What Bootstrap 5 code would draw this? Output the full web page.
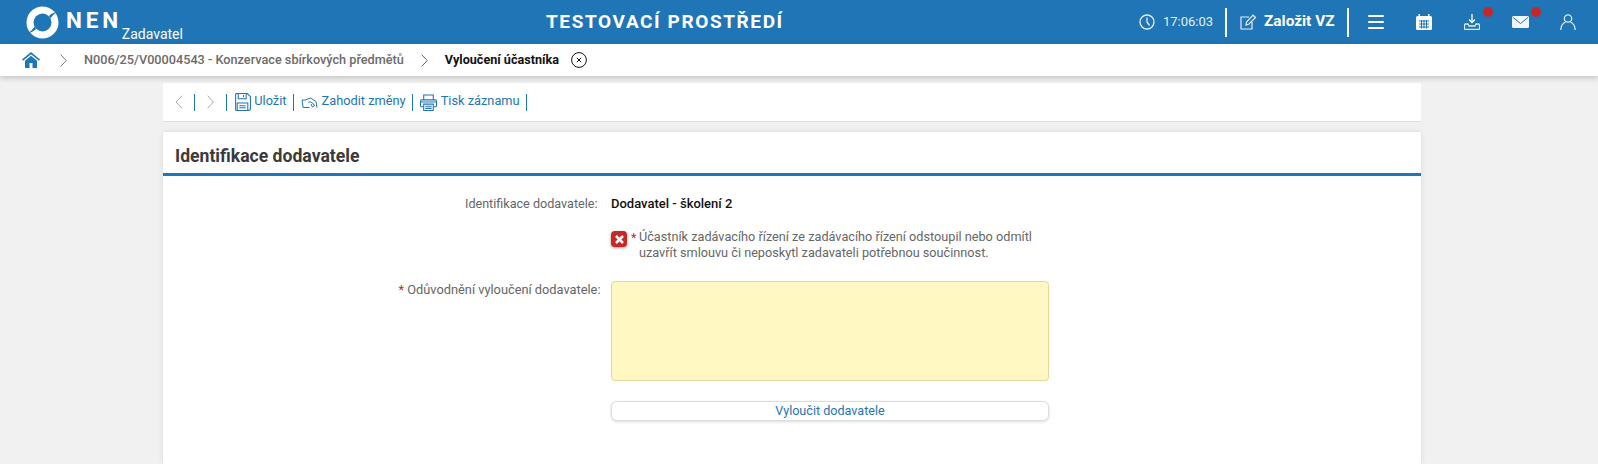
<!DOCTYPE html>
<html lang="cs">

<head>
    <meta charset="UTF-8">
    <meta name="viewport" content="width=device-width, initial-scale=1.0">
    <title>NEN Zadavatel</title>
    <link rel="stylesheet" href="https://cdn.jsdelivr.net/npm/bootstrap@5.3.3/dist/css/bootstrap.min.css">
    <script src="https://cdn.jsdelivr.net/npm/bootstrap@5.3.3/dist/js/bootstrap.bundle.min.js"></script>
    <style>
        html, body { height: 464px; overflow: hidden; }
        body { background: #f1f1f1; font-family: Roboto, "Liberation Sans", sans-serif; font-size: 12.6px; color: #555; }
        svg { display: block; flex: none; }

        .topbar { height: 44px; background: #1f75b5; color: #fff; padding-right: 6px; }
        .logo-box { padding-left: 26px; }
        .logo-nen { font-size: 22.5px; font-weight: 700; letter-spacing: 3.8px; line-height: 1; margin-left: 7px; margin-top: -3px; }
        .logo-role { font-size: 14px; line-height: 1; align-self: flex-end; margin-bottom: 3px; margin-left: 0; }
        .env-title { font-size: 19px; font-weight: 700; letter-spacing: 1.6px; left: 546px; top: 9px; line-height: 26px; }
        .clock-time { font-size: 13px; color: #e3eff8; margin-left: 8px; margin-right: 13px; width: 49px; }
        .top-sep { width: 2px; height: 29px; background: #fff; }
        .new-btn { font-size: 15.4px; font-weight: 700; width: 120px; padding-left: 13px; gap: 7px; }
        .top-icon { width: 48px; height: 44px; }
        .first-icon { margin-left: 3px; }
        .alert-dot { width: 10px; height: 10px; border-radius: 50%; background: #c62828; top: 7px; right: 3px; }

        .crumbs { height: 32px; background: #fff; box-shadow: 0 2px 6px rgba(0,0,0,.2); padding-left: 22px; font-weight: 500; position: relative; }
        .crumb-path { color: #6e6a68; font-size: 12.7px; }
        .crumb-now { color: #111; font-weight: 700; }
        .chev-one { margin: 0 17px 0 20px; }
        .chev-two { margin: 0 17px; }
        .crumb-close { margin-left: 12px; }

        .page-wrap { width: 1258px; margin-left: 163px; }
        .tools { height: 39px; margin-top: 7px; background: #fff; border-bottom: 1px solid #ddd; color: #1f75b5; font-size: 12.8px; }
        .tool-sep { width: 1px; height: 17px; background: #1f75b5; }
        .tool-btn { gap: 3.5px; padding: 0 6.5px 0 7px; }
        .tool-btn span { margin-top: -2px; }
        .arrow-btn { padding: 0 11.7px; }

        .panel { margin-top: 10px; background: #fff; box-shadow: 0 0 6px rgba(0,0,0,.1); height: 332px; }
        .panel-head { height: 44px; border-bottom: 3px solid #1f75b5; padding: 13px 12px 0; font-size: 17.6px; font-weight: 700; color: #3a3a3a; line-height: 22px; }
        .form-line { display: grid; grid-template-columns: 434.5px 438px; column-gap: 13.5px; }
        .line-name { margin-top: 19px; }
        .line-check { margin-top: 16px; }
        .line-reason { margin-top: 20px; }
        .line-action { margin-top: 20px; }
        .form-lbl { text-align: right; color: #666; line-height: 18px; }
        .reason-lbl { font-size: 12.8px; margin-right: -3px; }
        .form-val { color: #111; font-weight: 500; line-height: 18px; font-size: 13px; }
        .req { color: #c62828; }
        .x-box { width: 16px; height: 16px; flex: none; margin-top: 2px; border-radius: 4px; background: #c62828; box-shadow: 0 1px 3px rgba(0,0,0,.4); }
        .star-mark { margin-left: 4px; width: 8px; flex: none; }
        .check-txt { line-height: 16px; color: #666; font-size: 12.7px; }
        .reason-box { width: 438px; height: 100px; background: #fff8c2; border: 1px solid #e3d898; border-radius: 4px; resize: none; display: block; outline: 0; }
        .exclude-btn { width: 438px; height: 20px; padding: 0; font-size: 12.6px; line-height: 18px; color: #1f75b5; background: #fff; border: 1px solid #ddd; border-radius: 6px; box-shadow: 0 1px 3px rgba(0,0,0,.15); }
    </style>
</head>

<body>
    <header class="topbar d-flex align-items-center position-relative">
        <div class="logo-box d-flex align-items-center h-100">
            <svg width="33" height="33" viewBox="0 0 33 33">
                <circle cx="16.500" cy="16.500" r="16" fill="#fff"/>
                <circle cx="16.500" cy="16.500" r="9" fill="#1f75b5"/>
                <path d="M23 10C25.500 7.500 28 6 30 6.500 28 8 26 10 24.500 12.500Z" fill="#1f75b5"/>
                <path d="M10 23C7.500 25.500 5 27 3 26.500 5 25 7 23 8.500 20.500Z" fill="#1f75b5"/>
            </svg>
            <span class="logo-nen">NEN</span>
            <span class="logo-role">Zadavatel</span>
        </div>
        <div class="env-title position-absolute">TESTOVACÍ PROSTŘEDÍ</div>
        <div class="ms-auto d-flex align-items-center h-100">
            <svg width="16" height="16" viewBox="0 0 16 16" fill="none" stroke="#e3eff8" stroke-width="1.300"><circle cx="8" cy="8" r="7"/><path d="M8 3.500V8l2.500 3.500"/></svg>
            <span class="clock-time">17:06:03</span>
            <span class="top-sep"></span>
            <div class="new-btn d-flex align-items-center">
                <svg width="17" height="16" viewBox="0 0 17 16" fill="none" stroke="#e3eff8" stroke-width="1.200"><path d="M9 3H1v12h11V8"/><path d="M6 11l.5-3L13 1.200l2.500 2.300L9 10z"/></svg>
                <span>Založit VZ</span>
            </div>
            <span class="top-sep"></span>
            <div class="top-icon first-icon d-flex align-items-center justify-content-center">
                <svg width="16" height="14" viewBox="0 0 16 14" fill="#fff"><rect width="16" height="2" rx="1"/><rect y="6" width="16" height="2" rx="1"/><rect y="12" width="16" height="2" rx="1"/></svg>
            </div>
            <div class="top-icon d-flex align-items-center justify-content-center">
                <svg width="16" height="16" viewBox="0 0 16 16"><rect y="2" width="16" height="14" rx="1.500" fill="#fff"/><rect x="2.500" y="0" width="1.500" height="3" fill="#fff"/><rect x="12" y="0" width="1.500" height="3" fill="#fff"/><path d="M3 7h10M3 10h10M3 13h10M5.500 6v8.500M8 6v8.500M10.500 6v8.500" stroke="#1f75b5" stroke-width="1"/></svg>
            </div>
            <div class="top-icon d-flex align-items-center justify-content-center position-relative">
                <svg width="16" height="16" viewBox="0 0 16 16" fill="none" stroke="#dcebf6" stroke-width="1.300"><path d="M8 0v8.500M5 5.500L8 8.500l3-3" stroke="#fff"/><path d="M4 10H1.500a1 1 0 0 0-1 1v3.500a1 1 0 0 0 1 1h13a1 1 0 0 0 1-1V11a1 1 0 0 0-1-1H12l-1 2H5z"/></svg>
                <span class="alert-dot position-absolute"></span>
            </div>
            <div class="top-icon d-flex align-items-center justify-content-center position-relative">
                <svg width="17" height="12" viewBox="0 0 17 12"><rect width="17" height="12" rx="1.500" fill="#f0f6fb"/><path d="M1 1.500l7.500 6 7.500-6" fill="none" stroke="#1f75b5" stroke-width="1"/></svg>
                <span class="alert-dot position-absolute"></span>
            </div>
            <div class="top-icon d-flex align-items-center justify-content-center">
                <svg width="16" height="16" viewBox="0 0 16 16" fill="none" stroke="#dcebf6" stroke-width="1.300"><circle cx="8" cy="4.500" r="3.700"/><path d="M.8 16c0-4.500 2.700-7 4.700-8M15.200 16c0-4.500-2.700-7-4.700-8"/></svg>
            </div>
        </div>
    </header>

    <nav class="crumbs d-flex align-items-center">
        <svg width="18" height="16" viewBox="0 0 18 16" fill="#1f75b5"><path d="M9 0L0 7.500l1 1.200L9 2.200l8 6.500 1-1.200z"/><path d="M9 3.800L3 8.800V16h4.500v-5h3v5H15V8.800z"/></svg>
        <svg class="chev-one" width="7" height="13" viewBox="0 0 7 13" fill="none" stroke="#777"><path d="M.7.700l5.600 5.800-5.600 5.800"/></svg>
        <span class="crumb-path">N006/25/V00004543 - Konzervace sbírkových předmětů</span>
        <svg class="chev-two" width="7" height="13" viewBox="0 0 7 13" fill="none" stroke="#1f75b5"><path d="M.7.700l5.600 5.800-5.600 5.800"/></svg>
        <span class="crumb-now">Vyloučení účastníka</span>
        <svg class="crumb-close" width="16" height="16" viewBox="0 0 16 16" fill="none" stroke="#111"><circle cx="8" cy="8" r="7.400"/><path d="M5.800 5.800l4.400 4.400M10.200 5.800l-4.400 4.400"/></svg>
    </nav>

    <main class="page-wrap">
        <div class="tools d-flex align-items-center">
            <div class="arrow-btn"><svg width="8" height="14" viewBox="0 0 8 14" fill="none" stroke="#aaa"><path d="M7 .7L1 7l6 6.300"/></svg></div>
            <span class="tool-sep"></span>
            <div class="arrow-btn"><svg width="7" height="14" viewBox="0 0 7 14" fill="none" stroke="#aaa"><path d="M.7.7L6.300 7 .7 13.300"/></svg></div>
            <span class="tool-sep"></span>
            <div class="tool-btn d-flex align-items-center">
                <svg width="17" height="18" viewBox="0 0 16 17" fill="none" stroke="#1f75b5"><path d="M1.500.5h11l3 3v11a2 2 0 0 1-2 2h-11a1 1 0 0 1-1-1v-14a1 1 0 0 1 1-1z"/><path d="M4 .5v5h7.500v-5M9 2v2M3 16.500v-7h10v7M5 12h6M5 14h6"/></svg>
                <span>Uložit</span>
            </div>
            <span class="tool-sep"></span>
            <div class="tool-btn d-flex align-items-center">
                <svg width="17" height="11" viewBox="0 0 16 11" fill="none" stroke="#1f75b5"><path d="M4 3H.6l1 7.500h6.500"/><path d="M4 3l5-2 5.500 3.500 1 6"/><path d="M6.500 5.500c2-1 4.500-.5 6 2.500M9.500 7l1.500 3 2.500-2"/></svg>
                <span>Zahodit změny</span>
            </div>
            <span class="tool-sep"></span>
            <div class="tool-btn d-flex align-items-center">
                <svg width="17" height="17" viewBox="0 0 16 16" fill="none" stroke="#1f75b5"><path d="M3.500 5V1h9v4M3.500 12H1.500a1 1 0 0 1-1-1V6.500a1 1 0 0 1 1-1h13a1 1 0 0 1 1 1V11a1 1 0 0 1-1 1h-2"/><path d="M3.500 9.500h9v6h-9zM5 11.500h6M5 13.500h6M.5 7.500h15"/></svg>
                <span>Tisk záznamu</span>
            </div>
            <span class="tool-sep"></span>
        </div>

        <section class="panel">
            <div class="panel-head">Identifikace dodavatele</div>
            <div class="form-line line-name">
                <div class="form-lbl">Identifikace dodavatele:</div>
                <div class="form-val">Dodavatel - školení 2</div>
            </div>
            <div class="form-line line-check">
                <div></div>
                <div class="d-flex">
                    <span class="x-box d-flex align-items-center justify-content-center">
                        <svg width="9" height="9" viewBox="0 0 9 9" stroke="#fff" stroke-width="2.500"><path d="M1 1l7 7M8 1L1 8"/></svg>
                    </span>
                    <span class="req star-mark">*</span>
                    <span class="check-txt">Účastník zadávacího řízení ze zadávacího řízení odstoupil nebo odmítl uzavřít smlouvu či neposkytl zadavateli potřebnou součinnost.</span>
                </div>
            </div>
            <div class="form-line line-reason">
                <div class="form-lbl reason-lbl"><span class="req">*</span> Odůvodnění vyloučení dodavatele:</div>
                <textarea class="reason-box" aria-label="Odůvodnění vyloučení dodavatele"></textarea>
            </div>
            <div class="form-line line-action">
                <div></div>
                <button type="button" class="btn exclude-btn">Vyloučit dodavatele</button>
            </div>
        </section>
    </main>
</body>

</html>
